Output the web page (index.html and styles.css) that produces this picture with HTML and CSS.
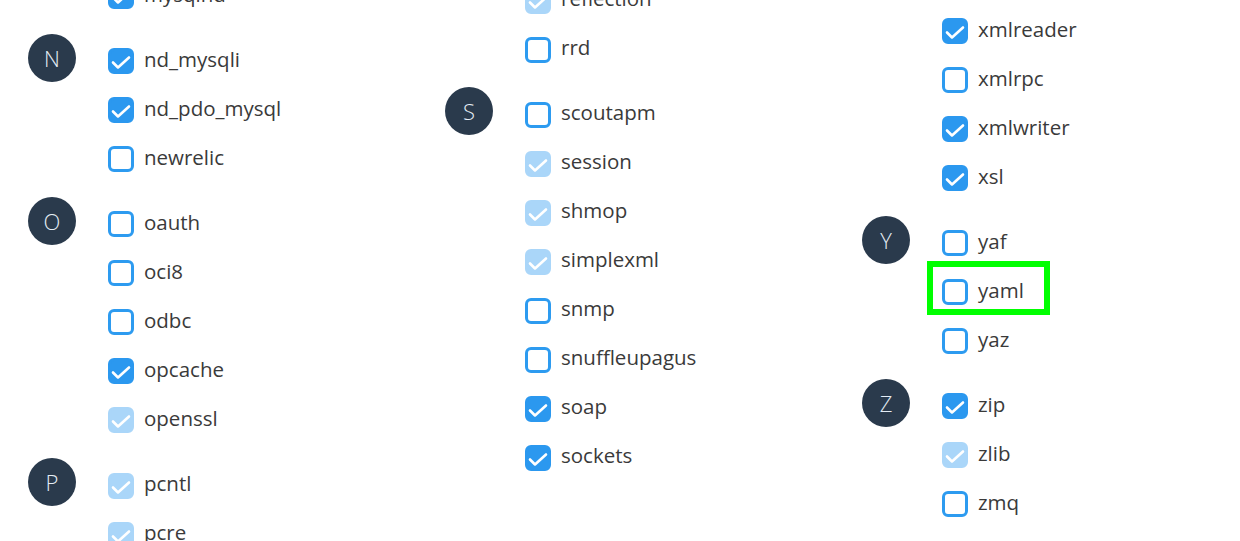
FILE: index.html
```html
<!DOCTYPE html>
<html lang="en">
<head>
<meta charset="utf-8">
<title>PHP extensions</title>
<link rel="stylesheet" href="styles.css">
</head>
<body>
<div class="page">
  <main class="main">
    <section class="col col-1">
      <div class="group">
        <div class="letter letter-empty"></div>
        <ul class="items">
          <li class="item"><span class="cb cb-on"><svg viewBox="0 0 26 26"><path d="M5 14.5 L10 19.5 L21 9.5"/></svg></span><span class="name">mysqlnd</span></li>
        </ul>
      </div>
      <div class="group">
        <div class="letter">N</div>
        <ul class="items">
          <li class="item"><span class="cb cb-on"><svg viewBox="0 0 26 26"><path d="M5 14.5 L10 19.5 L21 9.5"/></svg></span><span class="name">nd_mysqli</span></li>
          <li class="item"><span class="cb cb-on"><svg viewBox="0 0 26 26"><path d="M5 14.5 L10 19.5 L21 9.5"/></svg></span><span class="name">nd_pdo_mysql</span></li>
          <li class="item"><span class="cb"></span><span class="name">newrelic</span></li>
        </ul>
      </div>
      <div class="group">
        <div class="letter">O</div>
        <ul class="items">
          <li class="item"><span class="cb"></span><span class="name">oauth</span></li>
          <li class="item"><span class="cb"></span><span class="name">oci8</span></li>
          <li class="item"><span class="cb"></span><span class="name">odbc</span></li>
          <li class="item"><span class="cb cb-on"><svg viewBox="0 0 26 26"><path d="M5 14.5 L10 19.5 L21 9.5"/></svg></span><span class="name">opcache</span></li>
          <li class="item"><span class="cb cb-dis"><svg viewBox="0 0 26 26"><path d="M5 14.5 L10 19.5 L21 9.5"/></svg></span><span class="name">openssl</span></li>
        </ul>
      </div>
      <div class="group">
        <div class="letter">P</div>
        <ul class="items">
          <li class="item"><span class="cb cb-dis"><svg viewBox="0 0 26 26"><path d="M5 14.5 L10 19.5 L21 9.5"/></svg></span><span class="name">pcntl</span></li>
          <li class="item"><span class="cb cb-dis"><svg viewBox="0 0 26 26"><path d="M5 14.5 L10 19.5 L21 9.5"/></svg></span><span class="name">pcre</span></li>
        </ul>
      </div>
    </section>

    <section class="col col-2">
      <div class="group">
        <div class="letter letter-empty"></div>
        <ul class="items">
          <li class="item"><span class="cb cb-dis"><svg viewBox="0 0 26 26"><path d="M5 14.5 L10 19.5 L21 9.5"/></svg></span><span class="name">reflection</span></li>
          <li class="item"><span class="cb"></span><span class="name">rrd</span></li>
        </ul>
      </div>
      <div class="group">
        <div class="letter">S</div>
        <ul class="items">
          <li class="item"><span class="cb"></span><span class="name">scoutapm</span></li>
          <li class="item"><span class="cb cb-dis"><svg viewBox="0 0 26 26"><path d="M5 14.5 L10 19.5 L21 9.5"/></svg></span><span class="name">session</span></li>
          <li class="item"><span class="cb cb-dis"><svg viewBox="0 0 26 26"><path d="M5 14.5 L10 19.5 L21 9.5"/></svg></span><span class="name">shmop</span></li>
          <li class="item"><span class="cb cb-dis"><svg viewBox="0 0 26 26"><path d="M5 14.5 L10 19.5 L21 9.5"/></svg></span><span class="name">simplexml</span></li>
          <li class="item"><span class="cb"></span><span class="name">snmp</span></li>
          <li class="item"><span class="cb"></span><span class="name">snuffleupagus</span></li>
          <li class="item"><span class="cb cb-on"><svg viewBox="0 0 26 26"><path d="M5 14.5 L10 19.5 L21 9.5"/></svg></span><span class="name">soap</span></li>
          <li class="item"><span class="cb cb-on"><svg viewBox="0 0 26 26"><path d="M5 14.5 L10 19.5 L21 9.5"/></svg></span><span class="name">sockets</span></li>
        </ul>
      </div>
    </section>

    <section class="col col-3">
      <div class="group">
        <div class="letter letter-empty"></div>
        <ul class="items">
          <li class="item"><span class="cb cb-on"><svg viewBox="0 0 26 26"><path d="M5 14.5 L10 19.5 L21 9.5"/></svg></span><span class="name">xmlreader</span></li>
          <li class="item"><span class="cb"></span><span class="name">xmlrpc</span></li>
          <li class="item"><span class="cb cb-on"><svg viewBox="0 0 26 26"><path d="M5 14.5 L10 19.5 L21 9.5"/></svg></span><span class="name">xmlwriter</span></li>
          <li class="item"><span class="cb cb-on"><svg viewBox="0 0 26 26"><path d="M5 14.5 L10 19.5 L21 9.5"/></svg></span><span class="name">xsl</span></li>
        </ul>
      </div>
      <div class="group">
        <div class="letter">Y</div>
        <ul class="items">
          <li class="item"><span class="cb"></span><span class="name">yaf</span></li>
          <li class="item item-highlight"><span class="cb"></span><span class="name">yaml</span></li>
          <li class="item"><span class="cb"></span><span class="name">yaz</span></li>
        </ul>
      </div>
      <div class="group">
        <div class="letter">Z</div>
        <ul class="items">
          <li class="item"><span class="cb cb-on"><svg viewBox="0 0 26 26"><path d="M5 14.5 L10 19.5 L21 9.5"/></svg></span><span class="name">zip</span></li>
          <li class="item"><span class="cb cb-dis"><svg viewBox="0 0 26 26"><path d="M5 14.5 L10 19.5 L21 9.5"/></svg></span><span class="name">zlib</span></li>
          <li class="item"><span class="cb"></span><span class="name">zmq</span></li>
        </ul>
      </div>
    </section>
  </main>
  <aside class="side"></aside>
</div>
</body>
</html>
```

FILE: styles.css
```css
*, *::before, *::after { box-sizing: border-box; }

html, body {
  margin: 0;
  padding: 0;
  height: 100%;
  overflow: hidden;
  background: #ffffff;
  font-family: "Open Sans", "Liberation Sans", sans-serif;
}

.page {
  display: flex;
  width: 1240px;
  height: 541px;
  overflow: hidden;
}

.main {
  flex: 0 0 1223px;
  display: grid;
  grid-template-columns: 417px 417px 417px;
  align-items: start;
  padding-left: 28px;
  background: #ffffff;
}

.side {
  flex: 1 1 auto;
  background: #f9f6f1;
}

.col-1 { margin-top: -28.4px; }
.col-2 { margin-top: -24px; }
.col-3 { margin-top: 6.4px; }

.group {
  display: flex;
  align-items: flex-start;
  margin-bottom: 16.2px;
}

.letter {
  flex: 0 0 48px;
  width: 48px;
  height: 48px;
  margin-top: -2.8px;
  margin-right: 32px;
  border-radius: 50%;
  background: #2a3a4c;
  color: #e4edf5;
  font-size: 22px;
  font-weight: 300;
  display: flex;
  align-items: center;
  justify-content: center;
}

.letter-empty {
  background: transparent;
}

.items {
  list-style: none;
  margin: 0;
  padding: 0;
}

.item {
  position: relative;
  height: 49px;
  display: flex;
  align-items: center;
  gap: 10px;
}

.cb {
  flex: 0 0 26px;
  width: 26px;
  height: 26px;
  border: 3px solid #2d9bf0;
  border-radius: 6px;
  background: #ffffff;
  display: flex;
  align-items: center;
  justify-content: center;
}

.cb svg {
  width: 26px;
  height: 26px;
  margin: -3px;
  flex: 0 0 26px;
}

.cb svg path {
  fill: none;
  stroke: #ffffff;
  stroke-width: 2.6;
  stroke-linecap: round;
  stroke-linejoin: round;
}

.cb-on {
  background: #2b98ef;
  border-color: #2b98ef;
}

.cb-dis {
  background: #aad6f9;
  border-color: #aad6f9;
}

.name {
  font-size: 20.5px;
  color: #3a3a3a;
  line-height: 1;
  padding-bottom: 4px;
  white-space: nowrap;
}

.item-highlight::after {
  content: "";
  position: absolute;
  left: -15px;
  top: -6.7px;
  width: 123px;
  height: 54px;
  border: 6px solid #00ff00;
  pointer-events: none;
}
```
